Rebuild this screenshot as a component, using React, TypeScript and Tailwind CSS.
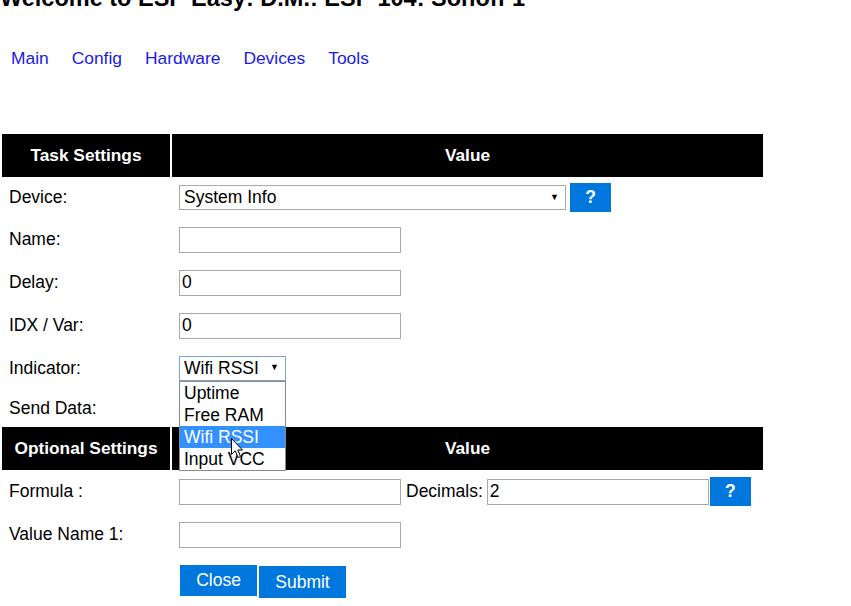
import React from 'react';

const font = { fontFamily: '"Liberation Sans", Arial, sans-serif' };

function Label({ children }: { children: React.ReactNode }) {
  return <div className="w-[172px] shrink-0 pl-[9px] text-[17.5px] text-black">{children}</div>;
}

function TextInput({ value = '', width = 'w-[222px]' }: { value?: string; width?: string }) {
  return (
    <input
      readOnly
      value={value}
      className={`${width} h-[26px] border border-[#a9a9a9] bg-white px-[2px] text-[17.5px] text-black outline-none`}
    />
  );
}

function HelpButton() {
  return (
    <div className="flex h-[29px] w-[41px] items-center justify-center bg-[#0077dd] text-[17.5px] font-bold text-white">
      ?
    </div>
  );
}

function HeaderRow({ title }: { title: string }) {
  return (
    <div className="flex h-[43px] gap-[2px] pl-[2px]">
      <div className="flex w-[168px] items-center justify-center bg-black text-[17.3px] font-bold text-white">{title}</div>
      <div className="flex w-[591px] items-center justify-center bg-black text-[17.3px] font-bold text-white">Value</div>
    </div>
  );
}

function Cursor() {
  return (
    <svg className="absolute left-[51px] top-[56px]" width="13" height="21" viewBox="0 0 13 21">
      <path d="M0.5 0.5 L0.5 16.5 L4.3 12.8 L7 19.5 L9.5 18.5 L6.8 12 L11.5 12 Z" fill="#fff" stroke="#000" strokeWidth="1" strokeLinejoin="miter" />
    </svg>
  );
}

export default function App() {
  const options = ['Uptime', 'Free RAM', 'Wifi RSSI', 'Input VCC'];

  return (
    <div className="h-[606px] w-[851px] overflow-hidden bg-white text-black" style={font}>
      {/* page is scrolled: the title is only partly visible */}
      <h1 className="mt-[-15px] whitespace-nowrap text-[23.5px] font-bold leading-[27px]">
        Welcome to ESP Easy: D.M.: ESP 104: Sonoff 1
      </h1>

      {/* Menu */}
      <div className="mt-[36px] flex gap-[23px] pl-[11px] text-[17.4px] leading-[21px] text-[#1a1ae6]">
        <span>Main</span>
        <span>Config</span>
        <span>Hardware</span>
        <span>Devices</span>
        <span>Tools</span>
      </div>

      <div className="mt-[65px]">
        <HeaderRow title="Task Settings" />

        <div className="flex h-[41px] items-center">
          <Label>Device:</Label>
          <div className="ml-[7px] flex items-center gap-[4px]">
            <div className="flex h-[25px] w-[387px] items-center justify-between border border-[#a9a9a9] bg-white pl-[4px] pr-[6px] text-[17.5px]">
              <span>System Info</span>
              <span className="text-[9px]">▼</span>
            </div>
            <HelpButton />
          </div>
        </div>

        <div className="flex h-[43px] items-center">
          <Label>Name:</Label>
          <div className="ml-[7px]"><TextInput /></div>
        </div>

        <div className="flex h-[43px] items-center">
          <Label>Delay:</Label>
          <div className="ml-[7px]"><TextInput value="0" /></div>
        </div>

        <div className="flex h-[43px] items-center">
          <Label>IDX / Var:</Label>
          <div className="ml-[7px]"><TextInput value="0" /></div>
        </div>

        <div className="relative z-10 flex h-[42px] items-center">
          <Label>Indicator:</Label>
          <div className="relative ml-[7px]">
            <div className="flex h-[25px] w-[107px] items-center justify-between border border-[#7ba4d9] bg-white pl-[4px] pr-[6px] text-[17.5px]">
              <span>Wifi RSSI</span>
              <span className="text-[9px]">▼</span>
            </div>
            <div className="absolute left-0 top-[25px] w-[107px] border border-[#8a8a8a] bg-white text-[17.5px] leading-[22px]">
              {options.map((o) => (
                <div key={o} className={o === 'Wifi RSSI' ? 'bg-[#3390ff] pl-[4px] text-white' : 'pl-[4px]'}>
                  {o}
                </div>
              ))}
              <Cursor />
            </div>
          </div>
        </div>

        <div className="flex h-[38px] items-center">
          <Label>Send Data:</Label>
          <div className="ml-[10px]"><input type="checkbox" readOnly checked /></div>
        </div>

        <HeaderRow title="Optional Settings" />

        <div className="flex h-[43px] items-center">
          <Label>Formula :</Label>
          <div className="ml-[7px] flex items-center">
            <TextInput />
            <span className="ml-[5px] mr-[4px] text-[17.5px]">Decimals:</span>
            <TextInput value="2" />
            <div className="ml-[1px]"><HelpButton /></div>
          </div>
        </div>

        <div className="flex h-[43px] items-center">
          <Label>Value Name 1:</Label>
          <div className="ml-[7px]"><TextInput /></div>
        </div>

        <div className="flex items-start gap-[2px] pl-[180px] pt-[9px] text-[17.5px] text-white">
          <div className="flex h-[31px] w-[77px] items-center justify-center bg-[#0077dd]">Close</div>
          <div className="mt-[1px] flex h-[32px] w-[87px] items-center justify-center bg-[#0077dd]">Submit</div>
        </div>
      </div>
    </div>
  );
}
